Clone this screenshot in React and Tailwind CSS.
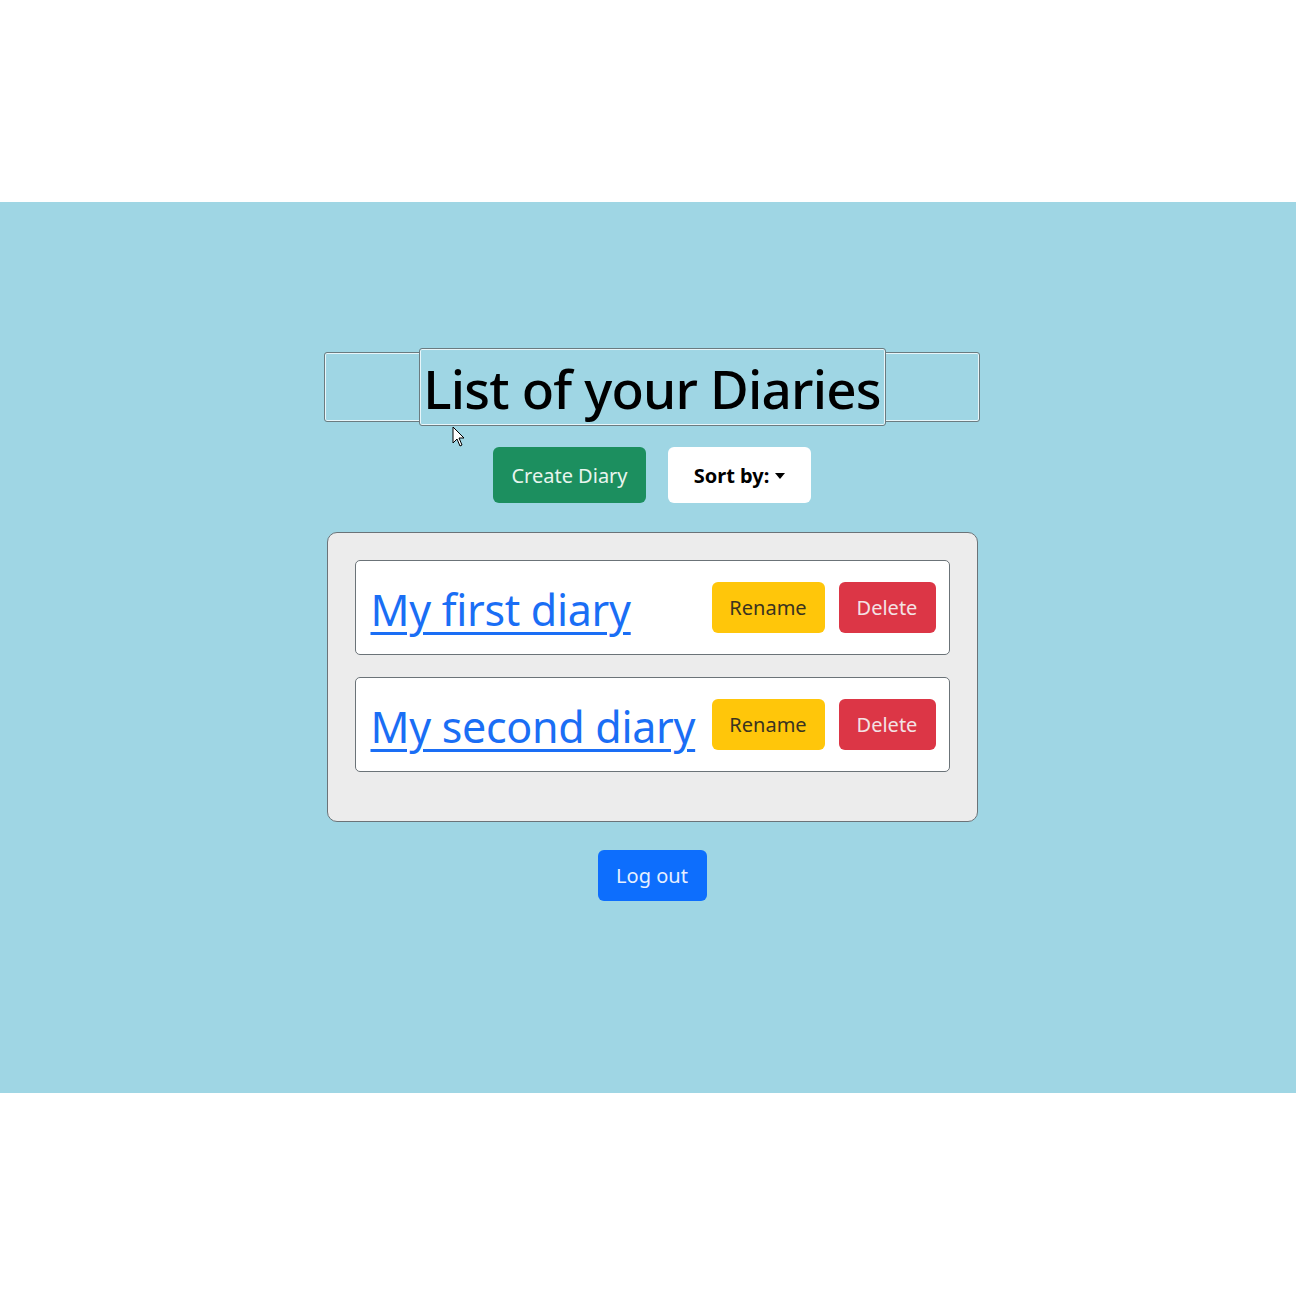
import React from "react";

const diaries = [
  { id: 1, name: "My first diary" },
  { id: 2, name: "My second diary" },
];

function Cursor() {
  return (
    <svg className="absolute left-[452px] top-[426px]" width="14" height="22" viewBox="0 0 14 22">
      <path d="M1 1 L1 17 L5 13 L8 20 L10 19 L7 12 L12 12 Z" fill="white" stroke="black" strokeWidth="1" strokeLinejoin="round" />
    </svg>
  );
}

export default function App() {
  return (
    <div className="w-[1296px] h-[1296px] bg-white font-['Noto_Sans',sans-serif] relative">
      <div className="h-[202px]" />
      <div className="h-[891px] bg-[#9fd6e4] flex flex-col items-center pt-[145px] pl-[8px]">
        {/* Title */}
        <div className="w-[656px] h-[70px] mt-[5px] border border-[#6b7b80] rounded-[3px] shadow-[inset_0_0_0_1px_#e8f6fa] flex justify-center">
          <div className="w-[467px] h-[78px] -mt-[5px] border border-[#6b7b80] rounded-[3px] bg-[#9fd6e4] shadow-[inset_0_0_0_1px_#e8f6fa] flex items-center justify-center">
            <h1 className="text-[53px] font-medium leading-none text-black tracking-[-0.8px] -mb-[2px]">List of your Diaries</h1>
          </div>
        </div>

        {/* Actions */}
        <div className="flex gap-[22px] mt-[25px]">
          <button className="w-[153px] h-[56px] rounded-[6px] bg-[#1c8f5f] text-[#e8f5ee] text-[20px] pt-[2px]">
            Create Diary
          </button>
          <button className="w-[143px] h-[56px] rounded-[6px] bg-white text-black text-[20px] font-bold flex items-center justify-center gap-[6px] pt-[2px]">
            Sort by:
            <span className="w-0 h-0 border-l-[5px] border-r-[5px] border-t-[6px] border-l-transparent border-r-transparent border-t-black" />
          </button>
        </div>

        {/* List */}
        <div className="w-[651px] mt-[29px] bg-[#ececec] border border-[#6b7378] rounded-[10px] px-[27px] pt-[27px] pb-[49px] flex flex-col gap-[22px]">
          {diaries.map((d) => (
            <div
              key={d.id}
              className="h-[95px] bg-white border border-[#6b7378] rounded-[5px] pl-[15px] pr-[13px] flex items-center justify-between"
            >
              <a href="#" className="text-[#1a6ef5] text-[43px] underline underline-offset-[6px] decoration-[3px] leading-none mt-[3px] tracking-[-0.3px]">
                {d.name}
              </a>
              <div className="flex gap-[14px]">
                <button className="w-[113px] h-[51px] rounded-[6px] bg-[#ffc60a] text-[#3a3320] text-[20px]">
                  Rename
                </button>
                <button className="w-[97px] h-[51px] rounded-[6px] bg-[#dc3646] text-[#f3e2e4] text-[20px]">
                  Delete
                </button>
              </div>
            </div>
          ))}
        </div>

        <button className="mt-[28px] w-[109px] h-[51px] rounded-[6px] bg-[#0d6efd] text-[#e6f0ff] text-[20px]">
          Log out
        </button>
      </div>
      <Cursor />
    </div>
  );
}
